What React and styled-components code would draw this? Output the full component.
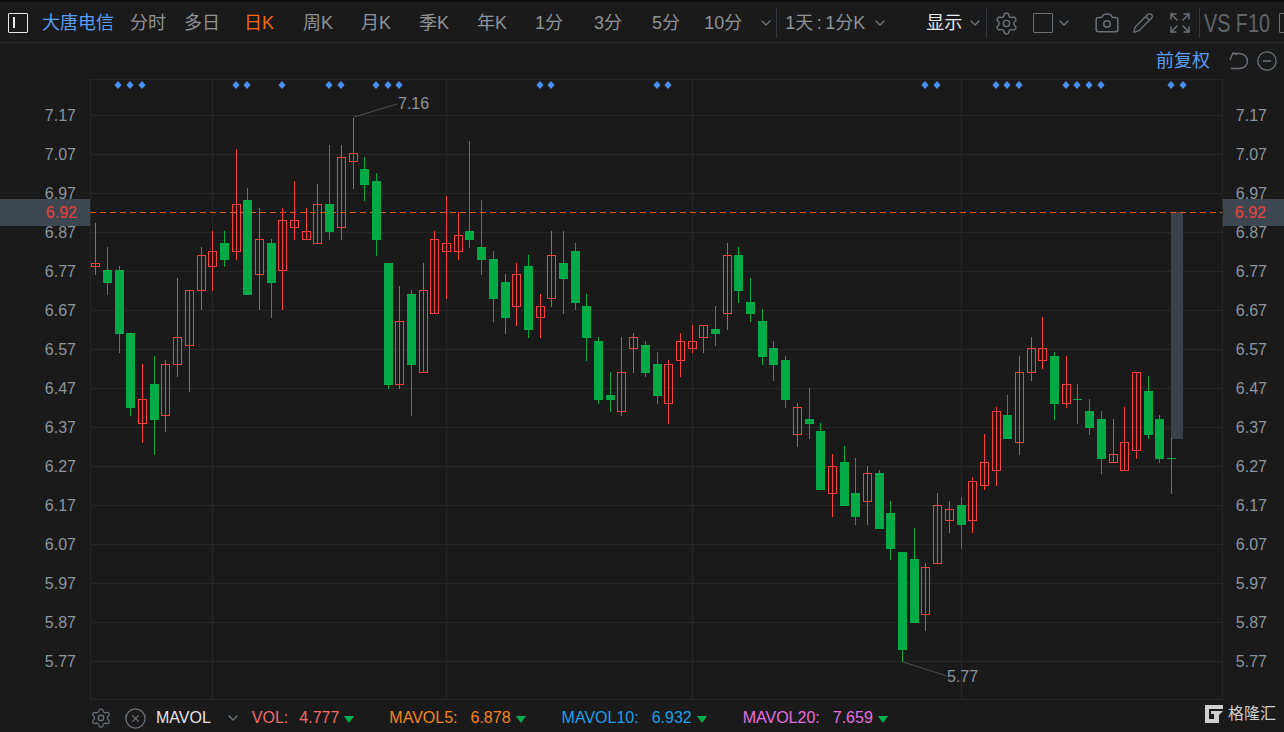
import React from "react";
import styled, { createGlobalStyle } from "styled-components";
import { Settings, Camera, Pencil, Expand, ChevronDown, CircleMinus, CircleX } from "lucide-react";

const GlobalStyle = createGlobalStyle`
  html, body {
    margin: 0;
    padding: 0;
    background: #1a1a1a;
  }
`;

const Page = styled.div`
  position: relative;
  width: 1284px;
  height: 732px;
  overflow: hidden;
  display: flex;
  flex-direction: column;
  background: #1a1a1a;
  font-family: "Liberation Sans", "Noto Sans CJK SC", sans-serif;
`;

const Toolbar = styled.div`
  box-sizing: border-box;
  height: 43px;
  flex: none;
  display: flex;
  align-items: center;
  padding: 2px 0 0 8px;
  border-top: 2px solid #0e0e0e;
  border-bottom: 1px solid #2a2a2a;
  white-space: nowrap;
  overflow: hidden;
`;

const ToggleBox = styled.div`
  box-sizing: border-box;
  width: 20px;
  height: 20px;
  flex: none;
  border: 1.5px solid #e8e8e8;
  border-radius: 1px;
  padding: 3px 0 0 4px;

  &::before {
    content: "";
    display: block;
    width: 1.5px;
    height: 11px;
    background: #e8e8e8;
  }
`;

const Tab = styled.span`
  flex: none;
  margin-left: ${({ $gap }) => $gap || 0}px;
  font-size: 18px;
  line-height: 24px;
  color: ${({ $color }) => $color || "#8e9398"};
`;

const PeriodLabel = styled(Tab)`
  word-spacing: -1.5px;
`;

const Caret = styled(ChevronDown)`
  flex: none;
  margin-left: ${({ $gap }) => $gap || 0}px;
  color: #70757a;
`;

const Divider = styled.div`
  flex: none;
  width: 1px;
  height: 30px;
  margin-left: ${({ $gap }) => $gap || 0}px;
  background: #33363a;
`;

const ToolIcon = styled.span`
  flex: none;
  display: flex;
  margin-left: ${({ $gap }) => $gap || 0}px;
  color: #6a7077;
`;

const BlankSquare = styled.div`
  box-sizing: border-box;
  flex: none;
  width: 20px;
  height: 20px;
  margin-left: ${({ $gap }) => $gap || 0}px;
  border: 1.5px solid #6a7077;
  border-radius: 1px;
`;

const SquashedLabel = styled.span`
  flex: none;
  width: 66px;
  margin-left: 4px;
  font-size: 25px;
  line-height: 30px;
  color: #5f656c;
  transform: scaleX(0.79);
  transform-origin: left center;
`;

const SubBar = styled.div`
  box-sizing: border-box;
  height: 36px;
  flex: none;
  display: flex;
  align-items: center;
  justify-content: flex-end;
  padding: 0 6px 0 0;
`;

const AdjustLabel = styled.span`
  font-size: 18px;
  line-height: 24px;
  color: #5b9df5;
`;

const ChartRow = styled.div`
  position: relative;
  flex: none;
  height: 621px;
  display: flex;
`;

const Axis = styled.div`
  position: relative;
  box-sizing: border-box;
  flex: none;
  width: ${({ $width }) => $width}px;
  padding: 16.5px ${({ $pad }) => $pad}px 0 0;
  display: flex;
  flex-direction: column;
  align-items: flex-end;
`;

const AxisLabel = styled.div`
  height: 39px;
  line-height: 39px;
  font-size: 16px;
  color: #8d959d;
`;

const PriceTag = styled.div`
  position: absolute;
  top: 120px;
  left: 0;
  right: 0;
  height: 27px;
  box-sizing: border-box;
  padding-right: ${({ $pad }) => $pad}px;
  text-align: right;
  line-height: 27px;
  font-size: 16px;
  color: #ee4040;
  background: #3e474f;
`;

const Plot = styled.svg`
  flex: none;
  display: block;
  width: 1133px;
  height: 621px;
`;

const PointLabel = styled.text`
  font-family: "Liberation Sans", sans-serif;
  font-size: 16px;
  fill: #8d959d;
`;

const Footer = styled.div`
  flex: none;
  height: 32px;
  display: flex;
  align-items: center;
  padding: 4px 0 0 90px;
  box-sizing: border-box;
  white-space: nowrap;
`;

const FootText = styled.span`
  flex: none;
  margin-left: ${({ $gap }) => $gap || 0}px;
  font-size: 16px;
  line-height: 20px;
  color: ${({ $color }) => $color};
`;

const DownMark = styled.span`
  flex: none;
  width: 0;
  height: 0;
  margin: 2px 0 0 5px;
  border-left: 5px solid transparent;
  border-right: 5px solid transparent;
  border-top: 7px solid #00b050;
`;

const Watermark = styled.div`
  position: absolute;
  right: 8px;
  bottom: 8px;
  display: flex;
  align-items: center;
  gap: 4px;
`;

const WatermarkText = styled.span`
  font-size: 16px;
  line-height: 20px;
  color: #cfcfcf;
`;

// x, high, body top, body bottom, low, rising
const candles = [
  [95, 223, 263, 266, 275, 1], [107, 247, 270, 283, 295, 0], [119, 266, 270, 334, 353, 0],
  [130, 333, 333, 408, 416, 0], [142, 364, 399, 423, 443, 1], [154, 356, 384, 420, 455, 0],
  [165, 360, 364, 415, 432, 1], [177, 278, 337, 364, 377, 1], [189, 290, 290, 345, 392, 1],
  [201, 247, 255, 290, 310, 1], [212, 231, 251, 266, 291, 1], [224, 231, 243, 260, 267, 0],
  [236, 149, 204, 251, 260, 1], [247, 188, 200, 295, 295, 0], [259, 208, 239, 274, 310, 1],
  [271, 239, 243, 283, 318, 0], [282, 208, 220, 270, 310, 1], [294, 181, 220, 227, 240, 1],
  [306, 208, 231, 239, 239, 1], [317, 184, 204, 243, 243, 1], [329, 145, 204, 232, 240, 0],
  [341, 145, 157, 227, 240, 1], [353, 118, 153, 161, 189, 1], [364, 157, 169, 185, 201, 0],
  [376, 173, 181, 240, 256, 0], [388, 263, 263, 385, 389, 0], [399, 286, 321, 384, 389, 1],
  [411, 290, 294, 365, 416, 0], [423, 263, 290, 372, 372, 1], [434, 231, 239, 313, 313, 1],
  [446, 196, 243, 251, 299, 1], [458, 212, 235, 251, 260, 1], [469, 141, 231, 240, 248, 0],
  [481, 200, 247, 260, 275, 0], [493, 251, 259, 299, 322, 0], [505, 274, 282, 318, 334, 0],
  [516, 263, 274, 306, 326, 1], [528, 255, 266, 330, 338, 0], [540, 294, 306, 317, 338, 1],
  [551, 231, 255, 298, 307, 1], [563, 231, 263, 279, 314, 0], [575, 243, 251, 303, 310, 0],
  [586, 294, 306, 338, 361, 0], [598, 337, 341, 400, 404, 0], [610, 372, 395, 400, 412, 0],
  [621, 337, 372, 411, 416, 1], [633, 333, 337, 348, 373, 1], [645, 341, 345, 373, 377, 0],
  [657, 352, 364, 396, 404, 0], [668, 360, 364, 403, 424, 1], [680, 333, 341, 360, 377, 1],
  [692, 325, 341, 348, 353, 1], [703, 325, 325, 337, 353, 1], [715, 306, 329, 334, 346, 0],
  [727, 243, 255, 313, 330, 1], [738, 247, 255, 291, 303, 0], [750, 278, 302, 314, 322, 0],
  [762, 309, 321, 357, 365, 0], [773, 341, 348, 365, 381, 0], [785, 356, 360, 400, 408, 0],
  [797, 403, 407, 434, 447, 1], [809, 388, 419, 424, 439, 0], [820, 423, 431, 490, 490, 0],
  [832, 454, 466, 493, 517, 1], [844, 446, 462, 506, 506, 0], [855, 458, 493, 517, 525, 0],
  [867, 466, 473, 501, 525, 1], [879, 470, 473, 529, 529, 0], [890, 501, 513, 549, 560, 0],
  [902, 552, 552, 650, 662, 0], [914, 528, 559, 623, 623, 0], [925, 563, 567, 614, 631, 1],
  [937, 493, 505, 563, 563, 1], [949, 501, 509, 520, 533, 1], [961, 497, 505, 525, 549, 0],
  [972, 477, 481, 520, 533, 1], [984, 434, 462, 485, 490, 1], [996, 407, 411, 470, 486, 1],
  [1007, 395, 415, 439, 439, 0], [1019, 356, 372, 442, 455, 1], [1031, 337, 348, 372, 381, 1],
  [1042, 317, 348, 360, 369, 1], [1054, 352, 356, 404, 420, 0], [1066, 356, 384, 403, 408, 1],
  [1077, 384, 399, 400, 424, 0], [1089, 399, 411, 428, 435, 0], [1101, 411, 419, 459, 474, 0],
  [1113, 419, 454, 462, 462, 1], [1124, 407, 442, 470, 470, 1], [1136, 372, 372, 450, 459, 1],
  [1148, 376, 391, 435, 439, 0], [1159, 415, 419, 459, 463, 0], [1171, 438, 458, 459, 494, 0],
];

const markers = [
  118, 130, 142, 236, 247, 282, 329, 341, 376, 388, 399, 540, 551, 657, 668,
  925, 937, 996, 1007, 1019, 1066, 1077, 1089, 1101, 1171, 1183,
];

const priceLevels = [
  "7.17", "7.07", "6.97", "6.87", "6.77", "6.67", "6.57", "6.47",
  "6.37", "6.27", "6.17", "6.07", "5.97", "5.87", "5.77",
];

const gridRows = [115, 154, 193, 232, 271, 310, 349, 388, 427, 466, 505, 544, 583, 622, 661];
const gridCols = [90, 212, 446, 692, 961, 1222];

const RED = "#f94040";
const GREEN = "#00ab47";

const Candle = ({ x, high, top, bottom, low, rising }) => {
  const color = rising ? RED : GREEN;
  return (
    <g shapeRendering="crispEdges">
      <rect x={x} y={high} width="1" height={low - high} fill={color} />
      {rising ? (
        <rect x={x - 3.5} y={top + 0.5} width="8" height={bottom - top} fill="none" stroke={color} />
      ) : (
        <rect x={x - 4} y={top} width="9" height={bottom - top} fill={color} />
      )}
    </g>
  );
};

const KChart = () => (
  <Plot viewBox="90 79 1133 621">
    <g stroke="#272727" shapeRendering="crispEdges">
      {gridRows.map((y) => (
        <line key={y} x1="90" x2="1222" y1={y + 0.5} y2={y + 0.5} />
      ))}
      {gridCols.map((x) => (
        <line key={x} x1={x + 0.5} x2={x + 0.5} y1="79" y2="700" />
      ))}
      <line x1="90" x2="1222" y1="79.5" y2="79.5" />
      <line x1="90" x2="1222" y1="699.5" y2="699.5" />
    </g>
    {markers.map((x) => (
      <path key={x} d={`M${x} 81 L${x + 3.6} 85 L${x} 89 L${x - 3.6} 85 Z`} fill="#4a90f2" />
    ))}
    <rect x="1171" y="212" width="12" height="227" fill="#3b4149" />
    <line x1="90" x2="1222" y1="212.5" y2="212.5" stroke="#e0600f" strokeDasharray="6 4" />
    {candles.map(([x, high, top, bottom, low, rising]) => (
      <Candle key={x} x={x} high={high} top={top} bottom={bottom} low={low} rising={rising} />
    ))}
    <line x1="354" y1="117" x2="397" y2="104" stroke="#4c4c4c" />
    <PointLabel x="398" y="109">7.16</PointLabel>
    <line x1="903" y1="662" x2="947" y2="676" stroke="#4c4c4c" />
    <PointLabel x="947" y="682">5.77</PointLabel>
  </Plot>
);

const UndoIcon = () => (
  <svg width="22" height="22" viewBox="0 0 22 22" fill="none" stroke="#6a7077" strokeWidth="1.5">
    <path d="M2 10 L5 3 L9 5" strokeWidth="1.3" />
    <path d="M4.5 3.5 H11 C16 3.5 19.5 7 19.5 11 C19.5 15.5 16 18.5 11 18.5 H3" />
  </svg>
);

const LogoMark = () => (
  <svg width="20" height="18" viewBox="0 0 20 18">
    <path d="M1 0 H19 V4 H5 V14 H10 V9 H7 V6 H19 L15 10 V18 H1 Z" fill="#cfcfcf" />
  </svg>
);

const App = () => (
  <Page>
    <GlobalStyle />
    <Toolbar>
      <ToggleBox />
      <Tab $gap={14} $color="#5b9df5">大唐电信</Tab>
      <Tab $gap={16}>分时</Tab>
      <Tab $gap={18}>多日</Tab>
      <Tab $gap={24} $color="#f5690f">日K</Tab>
      <Tab $gap={29}>周K</Tab>
      <Tab $gap={28}>月K</Tab>
      <Tab $gap={28}>季K</Tab>
      <Tab $gap={28}>年K</Tab>
      <Tab $gap={28}>1分</Tab>
      <Tab $gap={31}>3分</Tab>
      <Tab $gap={30}>5分</Tab>
      <Tab $gap={24}>10分</Tab>
      <Caret size={16} $gap={16} />
      <Divider $gap={2} />
      <PeriodLabel $gap={8}>1天 : 1分K</PeriodLabel>
      <Caret size={16} $gap={7} />
      <Tab $gap={38} $color="#e8e8e8">显示</Tab>
      <Caret size={16} $gap={5} />
      <Divider $gap={3} />
      <ToolIcon $gap={7}><Settings size={25} strokeWidth={1.4} /></ToolIcon>
      <BlankSquare $gap={14} />
      <Caret size={16} $gap={3} />
      <ToolIcon $gap={22}><Camera size={26} strokeWidth={1.4} /></ToolIcon>
      <ToolIcon $gap={12}><Pencil size={22} strokeWidth={1.5} /></ToolIcon>
      <ToolIcon $gap={14}><Expand size={24} strokeWidth={1.5} /></ToolIcon>
      <Divider $gap={7} />
      <SquashedLabel>VS F10</SquashedLabel>
      <BlankSquare $gap={9} />
    </Toolbar>
    <SubBar>
      <AdjustLabel>前复权</AdjustLabel>
      <ToolIcon $gap={18}><UndoIcon /></ToolIcon>
      <ToolIcon $gap={6}><CircleMinus size={22} strokeWidth={1.4} /></ToolIcon>
    </SubBar>
    <ChartRow>
      <Axis $width={90} $pad={14}>
        {priceLevels.map((p) => <AxisLabel key={p}>{p}</AxisLabel>)}
        <PriceTag $pad={13}>6.92</PriceTag>
      </Axis>
      <KChart />
      <Axis $width={61} $pad={17}>
        {priceLevels.map((p) => <AxisLabel key={p}>{p}</AxisLabel>)}
        <PriceTag $pad={18}>6.92</PriceTag>
      </Axis>
    </ChartRow>
    <Footer>
      <ToolIcon><Settings size={22} strokeWidth={1.4} /></ToolIcon>
      <ToolIcon $gap={12}><CircleX size={23} strokeWidth={1.4} /></ToolIcon>
      <FootText $gap={9} $color="#e6e6e6">MAVOL</FootText>
      <Caret size={16} $gap={14} />
      <FootText $gap={11} $color="#f26a6a">VOL:</FootText>
      <FootText $gap={11} $color="#f26a6a">4.777</FootText>
      <DownMark />
      <FootText $gap={35} $color="#f5851f">MAVOL5:</FootText>
      <FootText $gap={13} $color="#f5851f">6.878</FootText>
      <DownMark />
      <FootText $gap={36} $color="#1f9fe6">MAVOL10:</FootText>
      <FootText $gap={13} $color="#1f9fe6">6.932</FootText>
      <DownMark />
      <FootText $gap={36} $color="#e66fe0">MAVOL20:</FootText>
      <FootText $gap={13} $color="#e66fe0">7.659</FootText>
      <DownMark />
    </Footer>
    <Watermark>
      <LogoMark />
      <WatermarkText>格隆汇</WatermarkText>
    </Watermark>
  </Page>
);

export default App;
